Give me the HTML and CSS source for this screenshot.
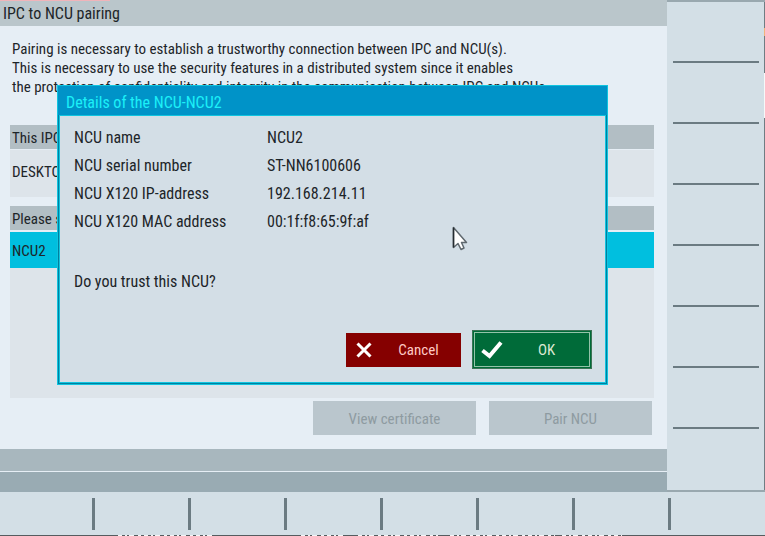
FILE: index.html
```html
<!DOCTYPE html>
<html lang="en">
<head>
<meta charset="utf-8">
<title>IPC to NCU pairing</title>
<link rel="stylesheet" href="styles.css">
</head>
<body>
<div class="screen">
  <div class="upper">
    <main class="main">
      <h1 class="title">IPC to NCU pairing</h1>
      <div class="content">
        <p class="intro">Pairing is necessary to establish a trustworthy connection between IPC and NCU(s).<br>This is necessary to use the security features in a distributed system since it enables<br>the protection of confidentiality and integrity in the communication between IPC and NCUs.</p>
        <section class="group ipc">
          <h2 class="group-head">This IPC</h2>
          <div class="group-body"><div class="row">DESKTOP</div></div>
        </section>
        <section class="group ncus">
          <h2 class="group-head">Please select NCU</h2>
          <div class="group-body"><div class="row selected">NCU2</div></div>
        </section>
        <div class="actions">
          <button class="action" type="button" disabled>View certificate</button>
          <button class="action" type="button" disabled>Pair NCU</button>
        </div>
      </div>
      <div class="bar message"></div>
      <div class="bar status"></div>

      <div class="dialog" role="dialog" aria-labelledby="dialog-title">
        <h2 class="dialog-title" id="dialog-title">Details of the NCU-NCU2</h2>
        <div class="dialog-body">
          <dl class="details">
            <dt>NCU name</dt><dd>NCU2</dd>
            <dt>NCU serial number</dt><dd>ST-NN6100606</dd>
            <dt>NCU X120 IP-address</dt><dd>192.168.214.11</dd>
            <dt>NCU X120 MAC address</dt><dd>00:1f:f8:65:9f:af</dd>
          </dl>
          <p class="question">Do you trust this NCU?</p>
          <div class="dialog-buttons">
            <button class="choice cancel" type="button">
              <svg width="16" height="16" viewBox="0 0 16 16" aria-hidden="true"><path d="M1.500 1.500L14.500 14.500M14.500 1.500L1.500 14.500" fill="none" stroke="#fff" stroke-width="3"/></svg>
              <span>Cancel</span>
            </button>
            <button class="choice ok" type="button">
              <svg width="22" height="18" viewBox="0 0 22 18" aria-hidden="true"><path d="M1.500 9.500L8.500 15L20 1.500" fill="none" stroke="#fff" stroke-width="4"/></svg>
              <span>OK</span>
            </button>
          </div>
        </div>
      </div>

      <svg class="cursor" width="16" height="26" viewBox="0 0 16 26" aria-hidden="true"><path d="M1.500 1.500V21.500L6 17.500L9 23.500L12 22L9.500 16.500H14.500Z" fill="#fff" stroke="#5f686e" stroke-width="1.500" stroke-linejoin="round"/><path d="M1.500 1.500V21.500" stroke="#252c31" stroke-width="1.500"/></svg>
    </main>
    <div class="side">
      <div class="key"></div><div class="key"></div><div class="key"></div><div class="key"></div>
      <div class="key"></div><div class="key"></div><div class="key"></div><div class="key"></div>
    </div>
  </div>
  <div class="bottom">
    <div class="softkey"></div><div class="softkey"></div><div class="softkey"></div><div class="softkey"></div>
    <div class="softkey"></div><div class="softkey"></div><div class="softkey"></div><div class="softkey"></div>
    <svg class="edge" width="765" height="2" viewBox="0 0 765 2" aria-hidden="true">
      <path d="M0 1.500H765" stroke="#555c5f"/>
      <path d="M118 1.500H216M301 1.500H345M358 1.500H438M450 1.500H555M562 1.500H622" stroke="#f2f5f6" stroke-dasharray="4 3 2 2 5 4 3 3"/>
    </svg>
  </div>
</div>
</body>
</html>
```
FILE: styles.css
```css
* { box-sizing: border-box; }
body {
  margin: 0;
  background: #d3dfe6;
  color: #1d2529;
  font: 15px/20px "Roboto Condensed", "Noto Sans", sans-serif;
}
h1, h2, p, dl, dd { margin: 0; font: inherit; }
button { font: inherit; border: 0; padding: 0; }

.screen { min-height: 100vh; display: flex; flex-direction: column; overflow: hidden; }
.upper { flex: 1; display: flex; }
.main { position: relative; flex: 1; display: flex; flex-direction: column; background: #e6eef5; }

.title {
  height: 26px;
  padding: 4px 3px 2px;
  background: linear-gradient(#f0b4ba, #f0b4ba) 0 0 / 110px 1px no-repeat #bac6cb;
}
.content { flex: 1; display: flex; flex-direction: column; padding: 13px 13px 14px 10px; }
.intro { padding: 1px 0 0 2px; height: 86px; white-space: nowrap; line-height: 19px; }
.group { display: flex; flex-direction: column; }
.group-head { height: 24px; padding: 3px 2px 1px; background: #b2bec4; }
.title { font-size: 16px; }
.group-body { background: #dde4ea; }
.ipc .group-body { height: 47px; margin-top: 1px; padding-top: 3px; }
.ncus { flex: 1; margin-top: 9px; }
.ncus .group-body { flex: 1; margin-top: 2px; }
.row { height: 36px; padding: 9px 2px 7px; }
.row.selected { background: #00bfdf; }
.actions { display: flex; justify-content: flex-end; gap: 13px; margin-top: 3px; padding-right: 2px; }
.action { width: 163px; height: 34px; padding-top: 2px; background: #bac6cd; color: #8e9ba1; }

.bar { height: 22px; background: #a8b7be; }
.status { height: 20px; margin-top: 1px; background: #99abb3; }

.dialog {
  position: absolute;
  top: 85px;
  left: 57px;
  right: 59px;
  border: 1px solid #10c4df;
  background: #007f9f;
  padding: 0 1px 1px;
}
.dialog-title { height: 29px; margin: 0 -1px; padding: 7px 8px 2px; background: #0093c8; color: #1cf0f8; }
.dialog-body {
  border: 1px solid #10c4df;
  background: #d3dee6;
  padding: 8px 13px 13px 14px;
}
.dialog-title, .details, .question { font-size: 16px; }
.details { display: grid; grid-template-columns: 193px 1fr; line-height: 28px; }
.question { margin-top: 36px; }
.dialog-buttons { display: flex; justify-content: flex-end; align-items: center; gap: 11px; margin-top: 38px; }
.choice { display: grid; align-items: center; text-align: center; color: #fff; }
.cancel { width: 115px; height: 34px; grid-template-columns: 20px 1fr; padding-left: 10px; background: #850000; color: #ffc9c5; }
.ok {
  width: 120px;
  height: 39px;
  grid-template-columns: 22px 1fr;
  padding: 0 1px 0 8px;
  border: 1px solid #3b7354;
  outline: 1px solid #94c3a9;
  outline-offset: -3px;
  background: #006b39;
  color: #dbe9d3;
}
.cursor { position: absolute; left: 452px; top: 226px; }

.side {
  width: 98px;
  display: grid;
  grid-template-rows: repeat(8, 1fr);
  padding: 0 6px;
  border-top: 2px solid #99a8af;
  border-bottom: 2px solid #99a8af;
  background:
    linear-gradient(#f2b27c, #f2b27c) 100% 26px / 1px 8px no-repeat,
    linear-gradient(#f6f8f9, #f6f8f9) 100% 71px / 1px 45px no-repeat,
    linear-gradient(#6f7d83, #6f7d83) 100% 0 / 1px 100% no-repeat;
}
.key { border-bottom: 2px solid #6b7b82; }
.key:last-child { border-bottom: 0; }

.bottom { position: relative; height: 44px; display: grid; grid-template-columns: 95px repeat(6, 96fr) 94fr; padding: 6px 0; }
.softkey { height: 32px; border-right: 3px solid #6b7b82; }
.softkey:nth-child(8) { border-right: 0; }
.edge { position: absolute; left: 0; bottom: 0; }
```
